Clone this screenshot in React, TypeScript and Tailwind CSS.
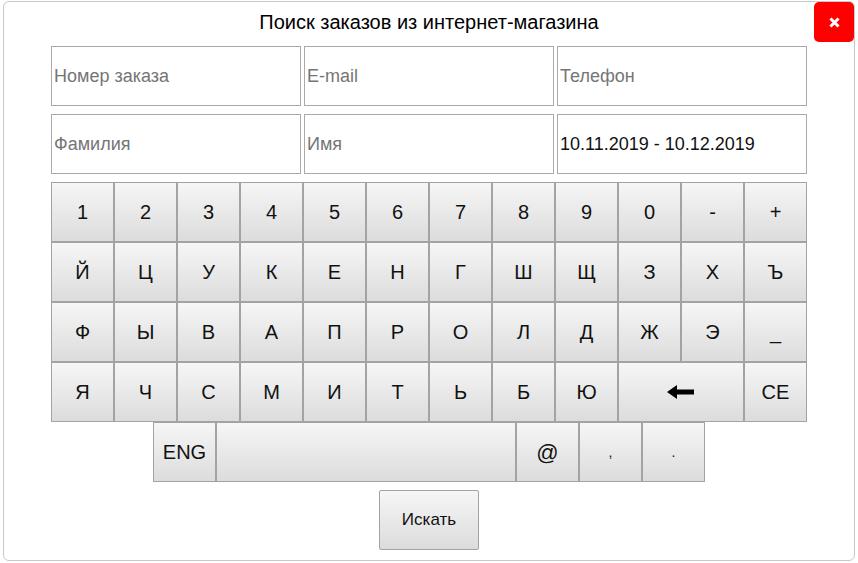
import React from "react";

const font = { fontFamily: '"Liberation Sans", Arial, sans-serif' };

const rows: string[][] = [
  ["1", "2", "3", "4", "5", "6", "7", "8", "9", "0", "-", "+"],
  ["Й", "Ц", "У", "К", "Е", "Н", "Г", "Ш", "Щ", "З", "Х", "Ъ"],
  ["Ф", "Ы", "В", "А", "П", "Р", "О", "Л", "Д", "Ж", "Э", "_"],
];

const keyCls =
  "flex items-center justify-center border border-[#a3a3a3] bg-gradient-to-b from-[#f6f6f6] to-[#dcdcdc] text-[#111] h-[60px]";

function Key({ label, className = "text-[20px]" }: { label?: React.ReactNode; className?: string }) {
  return <div className={`${keyCls} ${className}`}>{label}</div>;
}

function BackArrow() {
  return (
    <svg width="28" height="14" viewBox="0 0 28 14">
      <path d="M0 7 L10 0 L10 4.5 L27 4.5 L27 9.5 L10 9.5 L10 14 Z" fill="#000" />
    </svg>
  );
}

function Field({ placeholder, value }: { placeholder: string; value?: string }) {
  return (
    <div className="h-[60px] border border-[#a9a9a9] bg-white flex items-center px-[2px] text-[18px]">
      {value ? (
        <span className="text-[#111]">{value}</span>
      ) : (
        <span className="text-[#757575]">{placeholder}</span>
      )}
    </div>
  );
}

export default function App() {
  return (
    <div className="w-[858px] h-[563px] bg-white overflow-hidden pl-[3px] pt-[1px]" style={font}>
      <div className="relative w-[852px] h-[560px] bg-white border border-[#c8c8c8] rounded-[6px]">
        <div className="h-[38px] flex items-center justify-center text-[20px] text-black pt-[1px]">
          Поиск заказов из интернет-магазина
        </div>
        <button className="absolute top-0 right-0 w-[40px] h-[40px] bg-[#ff0000] rounded-[5px] flex items-center justify-center">
          <svg width="11" height="11" viewBox="0 0 11 11">
            <path d="M1.5 1.5 L9.5 9.5 M9.5 1.5 L1.5 9.5" stroke="#fff" strokeWidth="3" />
          </svg>
        </button>

        <div className="ml-[47px] mt-[6px] w-[756px]">
          <div className="grid grid-cols-3 gap-x-[3px] gap-y-[8px]">
            <Field placeholder="Номер заказа" />
            <Field placeholder="E-mail" />
            <Field placeholder="Телефон" />
            <Field placeholder="Фамилия" />
            <Field placeholder="Имя" />
            <Field placeholder="" value="10.11.2019 - 10.12.2019" />
          </div>

          <div className="mt-[8px] grid grid-cols-[repeat(12,63px)]">
            {rows.flat().map((k, i) => (
              <Key key={i} label={k} />
            ))}
            {["Я", "Ч", "С", "М", "И", "Т", "Ь", "Б", "Ю"].map((k) => (
              <Key key={k} label={k} />
            ))}
            <Key label={<BackArrow />} className="col-span-2" />
            <Key label="CE" />
          </div>

          <div className="flex justify-center">
            <Key label="ENG" className="w-[63px] text-[20px]" />
            <Key className="w-[300px]" />
            <Key label="@" className="w-[63px] text-[22px]" />
            <Key label="," className="w-[63px] text-[14px]" />
            <Key label="." className="w-[63px] text-[14px]" />
          </div>

          <div className="mt-[8px] flex justify-center">
            <button className="w-[100px] h-[60px] border border-[#a3a3a3] rounded-[2px] bg-gradient-to-b from-[#f6f6f6] to-[#dcdcdc] text-[17px] text-[#111]">
              Искать
            </button>
          </div>
        </div>
      </div>
    </div>
  );
}
